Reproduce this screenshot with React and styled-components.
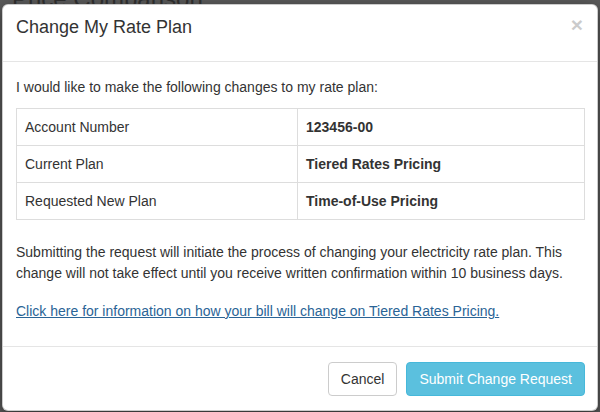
import React from "react";
import styled, { createGlobalStyle } from "styled-components";

const GlobalStyle = createGlobalStyle`
  html, body {
    margin: 0;
    padding: 0;
    background: #5a5a5a;
  }
  body {
    font-family: "Liberation Sans", Arial, Helvetica, sans-serif;
    font-size: 14px;
    line-height: 1.5;
    color: #333;
  }
`;

const rows = [
  { label: "Account Number", value: "123456-00" },
  { label: "Current Plan", value: "Tiered Rates Pricing" },
  { label: "Requested New Plan", value: "Time-of-Use Pricing" },
];

const App = () => {
  return (
    <>
      <GlobalStyle />
      <Backdrop>
        <PageStrip>
          <PageTitle>Price Comparison</PageTitle>
        </PageStrip>
        <Modal>
          <Header>
            <Title>Change My Rate Plan</Title>
            <Close aria-label="Close">×</Close>
          </Header>
          <Body>
            <Intro>I would like to make the following changes to my rate plan:</Intro>
            <Table>
              <tbody>
                {rows.map((r) => (
                  <tr key={r.label}>
                    <Cell $first>{r.label}</Cell>
                    <Cell $bold>{r.value}</Cell>
                  </tr>
                ))}
              </tbody>
            </Table>
            <Note>
              Submitting the request will initiate the process of changing your electricity rate plan. This
              change will not take effect until you receive written confirmation within 10 business days.
            </Note>
            <LinkLine>
              <InfoLink href="#">
                Click here for information on how your bill will change on Tiered Rates Pricing.
              </InfoLink>
            </LinkLine>
          </Body>
          <Footer>
            <Button>Cancel</Button>
            <Button $primary>Submit Change Request</Button>
          </Footer>
        </Modal>
      </Backdrop>
    </>
  );
};

export default App;

const Backdrop = styled.div`
  width: 600px;
  height: 412px;
  background: #5a5a5a;
  overflow: hidden;
  display: flex;
  flex-direction: column;
`;

const PageStrip = styled.div`
  height: 4px;
  overflow: hidden;
  position: relative;
`;

const PageTitle = styled.div`
  position: absolute;
  left: 12px;
  bottom: -7px;
  font-size: 24px;
  line-height: 24px;
  color: #2c2c2c;
  white-space: nowrap;
`;

const Modal = styled.div`
  margin-left: 2px;
  width: 596px;
  box-sizing: border-box;
  background: #fff;
  border: 1px solid rgba(0, 0, 0, 0.2);
  border-radius: 6px;
  box-shadow: 0 5px 15px rgba(0, 0, 0, 0.5);
  flex-shrink: 0;
`;

const Header = styled.div`
  display: flex;
  align-items: flex-start;
  justify-content: space-between;
  padding: 9px 14px 20px 13px;
  border-bottom: 1px solid #e5e5e5;
`;

const Title = styled.h4`
  margin: 0;
  font-size: 18px;
  font-weight: normal;
  line-height: 27px;
  color: #333;
`;

const Close = styled.button`
  margin-top: 0;
  border: 0;
  background: transparent;
  padding: 0;
  font-family: "Liberation Sans", Arial, sans-serif;
  font-size: 21px;
  font-weight: bold;
  line-height: 1;
  color: #000;
  opacity: 0.2;
  cursor: pointer;
`;

const Body = styled.div`
  padding: 15px 12px 15px 13px;
`;

const Intro = styled.p`
  margin: 0 0 10px;
`;

const Table = styled.table`
  width: 100%;
  border-collapse: collapse;
  margin-bottom: 22px;

  td {
    border: 1px solid #ddd;
  }
`;

const Cell = styled.td`
  padding: 8px;
  line-height: 20px;
  width: ${(p) => (p.$first ? "264px" : "auto")};
  font-weight: ${(p) => (p.$bold ? "bold" : "normal")};
  color: #333;
`;

const Note = styled.p`
  margin: 0 0 17px;
`;

const LinkLine = styled.p`
  margin: 0 0 9px;
`;

const InfoLink = styled.a`
  color: #2a6496;
  text-decoration: underline;
`;

const Footer = styled.div`
  display: flex;
  justify-content: flex-end;
  gap: 9px;
  padding: 15px 12px 14px 13px;
  border-top: 1px solid #e5e5e5;
`;

const Button = styled.button`
  font-family: "Liberation Sans", Arial, sans-serif;
  font-size: 14px;
  line-height: 20px;
  padding: 6px 12px;
  border-radius: 4px;
  border: 1px solid ${(p) => (p.$primary ? "#46b8da" : "#ccc")};
  background: ${(p) => (p.$primary ? "#5bc0de" : "#fff")};
  color: ${(p) => (p.$primary ? "#fff" : "#333")};
  cursor: pointer;
`;
